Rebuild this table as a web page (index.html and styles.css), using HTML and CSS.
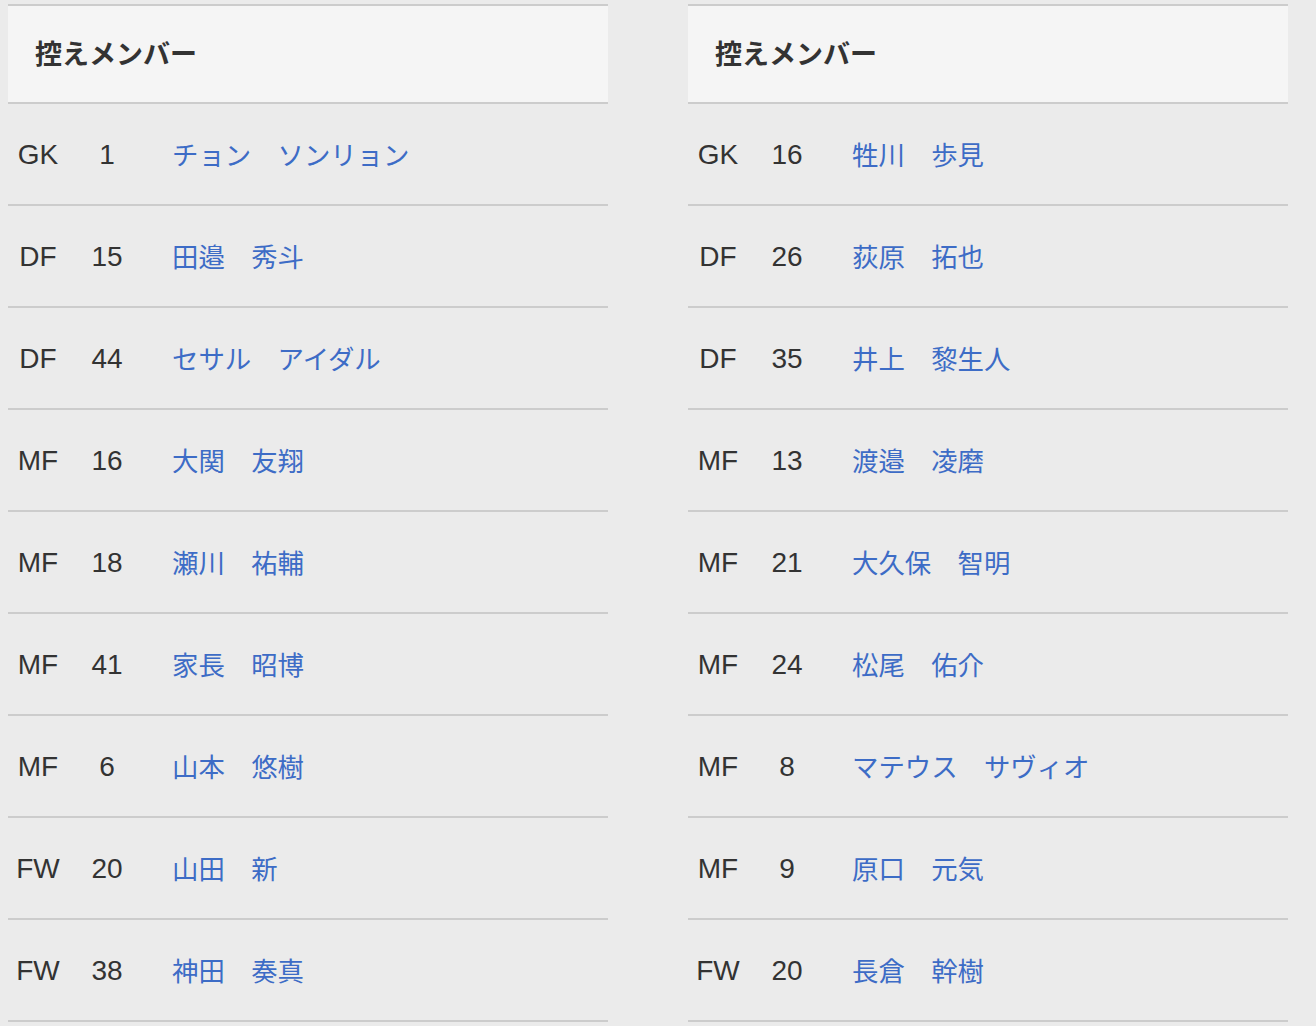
FILE: index.html
```html
<!DOCTYPE html>
<html lang="ja">
<head>
<meta charset="utf-8">
<title>控えメンバー</title>
<link rel="stylesheet" href="styles.css">
</head>
<body>
<div class="wrap">
  <section class="team">
    <div class="head">控えメンバー</div>
    <div class="row"><span class="pos">GK</span><span class="num">1</span><a class="name">チョン　ソンリョン</a></div>
    <div class="row"><span class="pos">DF</span><span class="num">15</span><a class="name">田邉　秀斗</a></div>
    <div class="row"><span class="pos">DF</span><span class="num">44</span><a class="name">セサル　アイダル</a></div>
    <div class="row"><span class="pos">MF</span><span class="num">16</span><a class="name">大関　友翔</a></div>
    <div class="row"><span class="pos">MF</span><span class="num">18</span><a class="name">瀬川　祐輔</a></div>
    <div class="row"><span class="pos">MF</span><span class="num">41</span><a class="name">家長　昭博</a></div>
    <div class="row"><span class="pos">MF</span><span class="num">6</span><a class="name">山本　悠樹</a></div>
    <div class="row"><span class="pos">FW</span><span class="num">20</span><a class="name">山田　新</a></div>
    <div class="row"><span class="pos">FW</span><span class="num">38</span><a class="name">神田　奏真</a></div>
  </section>
  <section class="team">
    <div class="head">控えメンバー</div>
    <div class="row"><span class="pos">GK</span><span class="num">16</span><a class="name">牲川　歩見</a></div>
    <div class="row"><span class="pos">DF</span><span class="num">26</span><a class="name">荻原　拓也</a></div>
    <div class="row"><span class="pos">DF</span><span class="num">35</span><a class="name">井上　黎生人</a></div>
    <div class="row"><span class="pos">MF</span><span class="num">13</span><a class="name">渡邉　凌磨</a></div>
    <div class="row"><span class="pos">MF</span><span class="num">21</span><a class="name">大久保　智明</a></div>
    <div class="row"><span class="pos">MF</span><span class="num">24</span><a class="name">松尾　佑介</a></div>
    <div class="row"><span class="pos">MF</span><span class="num">8</span><a class="name">マテウス　サヴィオ</a></div>
    <div class="row"><span class="pos">MF</span><span class="num">9</span><a class="name">原口　元気</a></div>
    <div class="row"><span class="pos">FW</span><span class="num">20</span><a class="name">長倉　幹樹</a></div>
  </section>
</div>
</body>
</html>
```
FILE: styles.css
```css
html, body {
  margin: 0;
  padding: 0;
  background: #ebebeb;
}
body {
  font-family: "Noto Sans CJK JP", "Noto Sans", sans-serif;
  color: #333333;
  overflow: hidden;
}
.wrap {
  display: flex;
  gap: 80px;
  padding: 4px 0 0 8px;
}
.team {
  width: 600px;
  border-top: 2px solid #cccccc;
}
.head {
  box-sizing: border-box;
  height: 98px;
  background: #f5f5f5;
  border-bottom: 2px solid #cccccc;
  display: flex;
  align-items: center;
  padding: 0 0 4px 27px;
  font-size: 27px;
  font-weight: bold;
  line-height: 1;
}
.row {
  height: 100px;
  border-bottom: 2px solid #cccccc;
  display: flex;
  align-items: center;
  font-size: 26.4px;
  line-height: 1;
}
.pos,
.num {
  font-family: "Liberation Sans", Arial, sans-serif;
  font-size: 28px;
  color: #333333;
  padding-top: 2px;
}
.pos {
  width: 60px;
  text-align: center;
}
.num {
  width: 78px;
  text-align: center;
}
.name {
  padding-left: 26px;
  color: #3d6cc6;
  text-decoration: none;
}
```
